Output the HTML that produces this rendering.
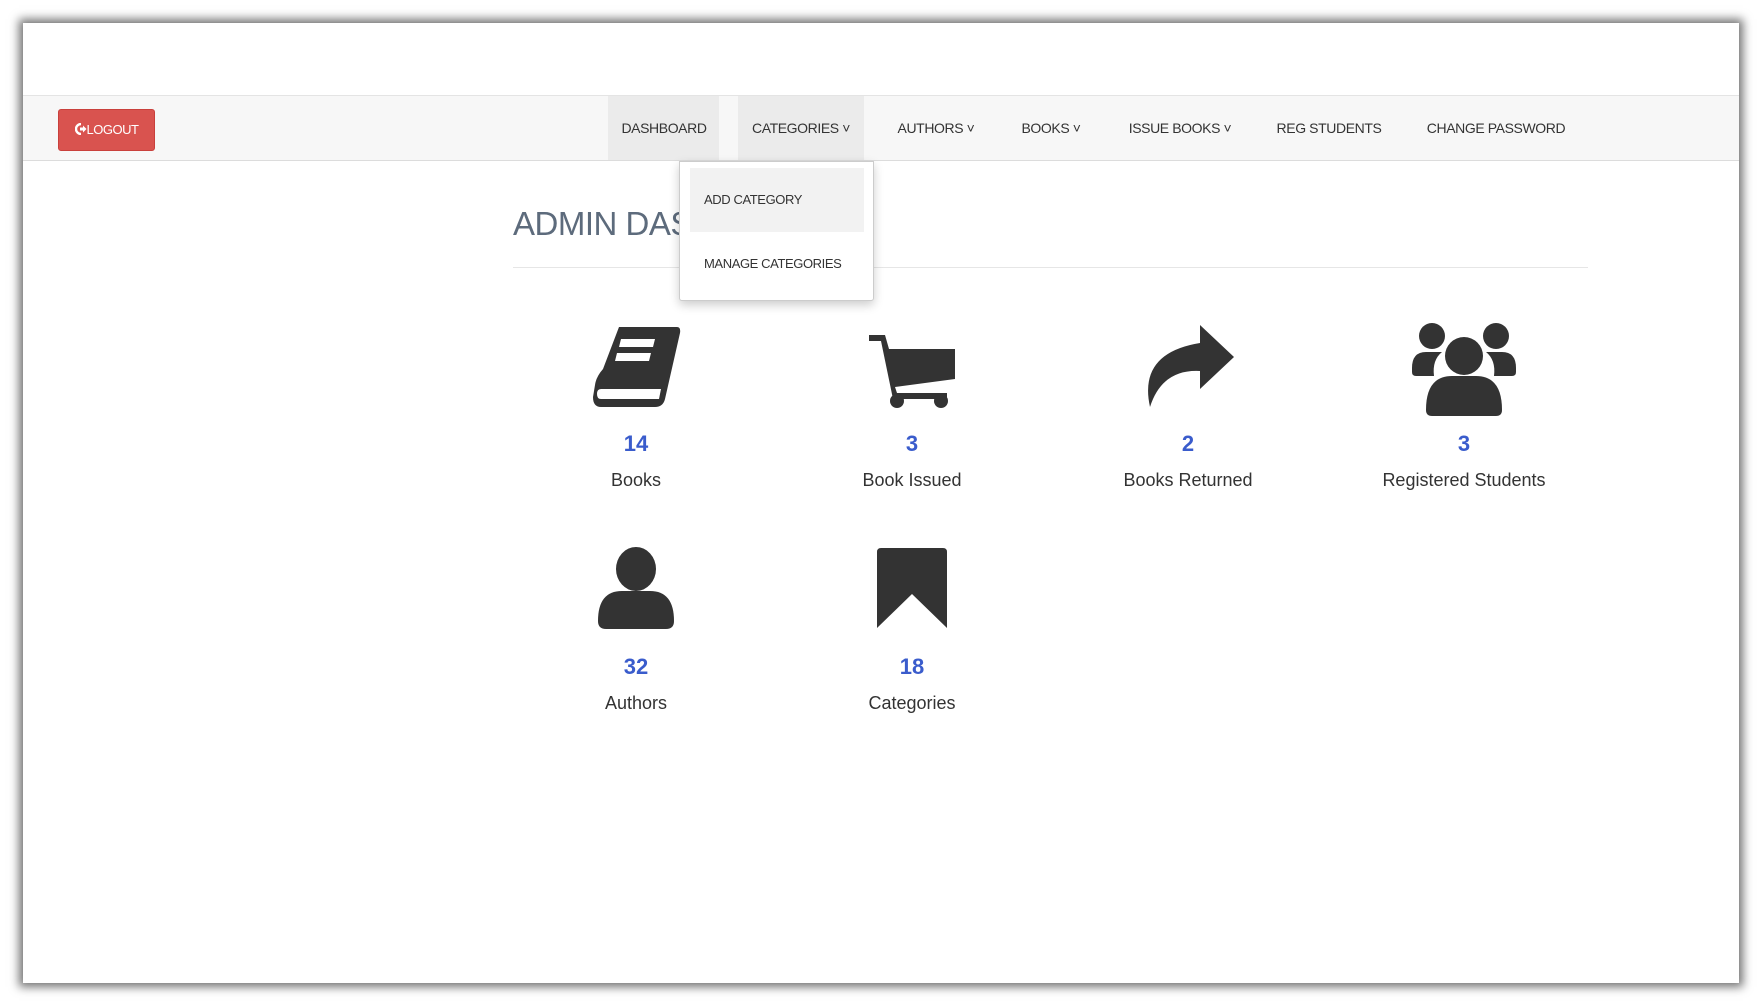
<!DOCTYPE html>
<html><head><meta charset="utf-8"><style>
*{margin:0;padding:0;box-sizing:border-box}
body{width:1760px;height:1005px;background:#fff;position:relative;overflow:hidden;font-family:"Liberation Sans",Arial,sans-serif}
.frame{position:absolute;left:23px;top:23px;width:1716px;height:960px;background:#fff;box-shadow:0 0 9px 4px rgba(0,0,0,.55)}
.nav{position:absolute;left:23px;top:95px;width:1716px;height:66px;background:#f7f7f7;border-top:1px solid #e4e4e4;border-bottom:1px solid #dcdcdc}
.logout{position:absolute;left:58px;top:109px;width:97px;height:42px;background:#d9534f;border:1px solid #c9403c;border-radius:3px;color:#fff;font-size:13px;line-height:40px;text-align:center;letter-spacing:-.5px}
.ni{position:absolute;top:95px;height:66px;line-height:66px;font-size:14px;color:#333;text-align:center;letter-spacing:-.4px;transform:translateX(-50%)}
.hl{position:absolute;top:96px;height:64px;background:#ebebeb}
.dd{position:absolute;z-index:5;left:679px;top:161px;width:195px;height:140px;background:#fff;border:1px solid #ccc;box-shadow:0 4px 10px rgba(0,0,0,.2);border-radius:0 0 3px 3px}
.dd .a{position:absolute;left:10px;top:6px;width:174px;height:64px;background:#f2f2f2}
.dd span{position:absolute;left:24px;font-size:13px;color:#333;letter-spacing:-.4px}
h1{position:absolute;left:513px;top:205px;font-weight:normal;font-size:33px;color:#5d6b7c;letter-spacing:-.5px}
.hr{position:absolute;left:513px;top:267px;width:1075px;height:1px;background:#e6e6e6}
.c{position:absolute;width:260px;transform:translateX(-50%);text-align:center}
.c svg{display:block;margin:0 auto}
.n{font-size:22px;font-weight:bold;color:#3a5ccc;position:absolute;width:100%}
.l{font-size:18px;color:#333;position:absolute;width:100%}
</style></head><body>
<div class="frame"></div>
<div class="nav"></div>
<div class="logout"><svg width="12" height="12" viewBox="0 0 12 12" style="vertical-align:-1px"><path d="M6 1A5 5 0 1 0 6 11" stroke="#fff" stroke-width="2.4" fill="none"/><path d="M5 4.5H8V2.5L11.5 6L8 9.5V7.5H5Z" fill="#fff"/></svg>LOGOUT</div>
<div class="hl" style="left:608px;width:111px"></div>
<div class="hl" style="left:738px;width:126px"></div>
<div class="ni" style="left:664px">DASHBOARD</div>
<div class="ni" style="left:801px">CATEGORIES ˅</div>
<div class="ni" style="left:936px">AUTHORS ˅</div>
<div class="ni" style="left:1051px">BOOKS ˅</div>
<div class="ni" style="left:1180px">ISSUE BOOKS ˅</div>
<div class="ni" style="left:1329px">REG STUDENTS</div>
<div class="ni" style="left:1496px">CHANGE PASSWORD</div>
<h1>ADMIN DASHBOARD</h1>
<div class="hr"></div>
<div class="dd"><div class="a"></div><span style="top:30px">ADD CATEGORY</span><span style="top:94px">MANAGE CATEGORIES</span></div>

<div class="c" style="left:636px;top:325px">
<svg width="90" height="84" viewBox="0 0 90 84"><path d="M28 2H86Q90 2 89 8L74 74Q72 82 64 82H10Q2 82 2 72L4 60Q5 52 12 44Z" fill="#333"/><path d="M10 64H70L68 74H10Q6 74 6 69Q6 64 10 64Z" fill="#fff"/><path d="M30 14H64L62 22H28ZM26 28H60L58 36H24Z" fill="#fff"/></svg>
<div class="n" style="top:106px">14</div><div class="l" style="top:145px">Books</div></div>

<div class="c" style="left:912px;top:333px">
<svg width="90" height="76" viewBox="0 0 90 76"><path d="M2 2H18L22 16H88V46L28 54L30 60H80V66H26L14 8H2Z" fill="#333"/><circle cx="30" cy="68" r="7" fill="#333"/><circle cx="74" cy="68" r="7" fill="#333"/></svg>
<div class="n" style="top:98px">3</div><div class="l" style="top:137px">Book Issued</div></div>

<div class="c" style="left:1188px;top:323px">
<svg width="96" height="86" viewBox="0 0 96 86"><path d="M60 2L94 34L60 66V48Q22 46 10 84Q-2 30 60 20Z" fill="#333"/></svg>
<div class="n" style="top:108px">2</div><div class="l" style="top:147px">Books Returned</div></div>

<div class="c" style="left:1464px;top:320px">
<svg width="104" height="96" viewBox="0 0 104 96"><circle cx="20" cy="16" r="13" fill="#333"/><circle cx="84" cy="16" r="13" fill="#333"/><path d="M0 48Q0 32 14 32H30Q20 40 22 56H4Q0 56 0 52ZM104 48Q104 32 90 32H74Q84 40 82 56H100Q104 56 104 52Z" fill="#333"/><circle cx="52" cy="36" r="19" fill="#333"/><path d="M14 90Q14 56 40 56H64Q90 56 90 90Q90 96 84 96H20Q14 96 14 90Z" fill="#333"/></svg>
<div class="n" style="top:111px">3</div><div class="l" style="top:150px">Registered Students</div></div>

<div class="c" style="left:636px;top:547px">
<svg width="76" height="82" viewBox="0 0 76 82"><ellipse cx="38" cy="22" rx="20" ry="22" fill="#333"/><path d="M0 74Q0 44 24 44H52Q76 44 76 74Q76 82 68 82H8Q0 82 0 74Z" fill="#333"/></svg>
<div class="n" style="top:107px">32</div><div class="l" style="top:146px">Authors</div></div>

<div class="c" style="left:912px;top:548px">
<svg width="70" height="82" viewBox="0 0 70 82"><path d="M4 0H66Q70 0 70 4V80L35 46L0 80V4Q0 0 4 0Z" fill="#333"/></svg>
<div class="n" style="top:106px">18</div><div class="l" style="top:145px">Categories</div></div>
</body></html>
